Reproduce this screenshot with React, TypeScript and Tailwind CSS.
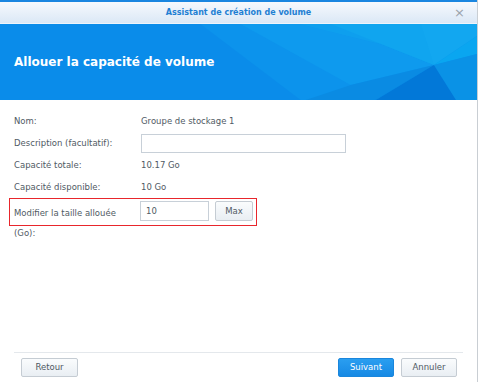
import React from 'react'

const font = { fontFamily: '"DejaVu Sans", Verdana, sans-serif' }

function HeaderArt() {
  return (
    <svg className="absolute inset-0 h-full w-full" viewBox="0 0 476 76" preserveAspectRatio="none">
      <rect width="476" height="76" fill="#0a8cea" />
      <polygon points="200,0 476,0 476,76 300,76" fill="#0c93ec" />
      <polygon points="240,0 330,0 433,41 350,61" fill="#0e9aee" />
      <polygon points="330,0 476,0 476,12 433,41" fill="#12a7f0" />
      <polygon points="433,41 476,12 476,30" fill="#0aa6f0" />
      <polygon points="350,61 433,41 375,76 305,76" fill="#0a8be3" />
      <polygon points="433,41 476,30 476,76 455,76" fill="#0a92e6" />
      <polygon points="433,41 455,76 375,76" fill="#0278d8" />
      <polygon points="300,0 420,0 433,41 380,20" fill="#0fa4ef" opacity="0.6" />
    </svg>
  )
}

function Row({ label, children }: { label: React.ReactNode; children?: React.ReactNode }) {
  return (
    <div className="flex items-center h-[22px]">
      <div className="w-[127px] text-[#505a64]">{label}</div>
      <div className="flex items-center text-[#505a64]">{children}</div>
    </div>
  )
}

export default function App() {
  return (
    <div className="w-[480px] h-[382px] bg-white overflow-hidden text-[8.5px]" style={font}>
      <div className="w-[478px] h-full border-r border-[#c9ced3] flex flex-col">
        <div className="h-[2px] bg-[#1a86e0]" />
        <div className="relative h-[22px] flex items-center justify-center bg-gradient-to-b from-[#f6f9fd] to-[#dbe8f6] border-b border-[#eef4fb]">
          <span className="font-bold text-[8px] text-[#1f7fd3]">Assistant de création de volume</span>
          <span className="absolute right-[12px] top-[4px] text-[#9aa3ab] text-[13px] leading-none">×</span>
        </div>
        <div className="relative h-[76px] flex items-center px-[14px]">
          <HeaderArt />
          <h1 className="relative text-white font-bold text-[12px]">Allouer la capacité de volume</h1>
        </div>
        <div className="flex-1 px-[14px] pt-[10px]">
          <Row label="Nom:">Groupe de stockage 1</Row>
          <Row label="Description (facultatif):">
            <div className="w-[205px] h-[19px] border border-[#c8d0d8] bg-white" />
          </Row>
          <Row label="Capacité totale:">10.17 Go</Row>
          <Row label="Capacité disponible:">10 Go</Row>
          <div className="relative -ml-[5px] w-[248px] h-[28px] border border-[#e8262c] flex items-start pl-[4px] pt-[2px]">
            <div className="w-[126px] pt-[6px] text-[#505a64] leading-[12px]">Modifier la taille allouée</div>
            <div className="w-[69px] h-[20px] border border-[#c8d0d8] bg-white flex items-center px-[5px] text-[#505a64]">10</div>
            <button className="ml-[6px] w-[38px] h-[20px] border border-[#c5ccd3] rounded-[2px] bg-gradient-to-b from-[#fafcfd] to-[#e9eef3] text-[#505a64]">Max</button>
          </div>
          <div className="mt-[1px] text-[#505a64]">(Go):</div>
        </div>
        <div className="mx-[14px] border-t border-[#e4e8ec]" />
        <div className="h-[29px] flex items-center pl-[21px] pr-[20px] pb-[1px]">
          <button className="w-[57px] h-[19px] border border-[#c5ccd3] rounded-[2px] bg-gradient-to-b from-[#fafcfd] to-[#e9eef3] text-[#505a64]">Retour</button>
          <div className="flex-1" />
          <button className="w-[56px] h-[19px] border border-[#1a86dc] rounded-[2px] bg-gradient-to-b from-[#2a9ef0] to-[#1689e4] text-white">Suivant</button>
          <button className="ml-[7px] w-[56px] h-[19px] border border-[#c5ccd3] rounded-[2px] bg-gradient-to-b from-[#fafcfd] to-[#e9eef3] text-[#505a64]">Annuler</button>
        </div>
      </div>
    </div>
  )
}
